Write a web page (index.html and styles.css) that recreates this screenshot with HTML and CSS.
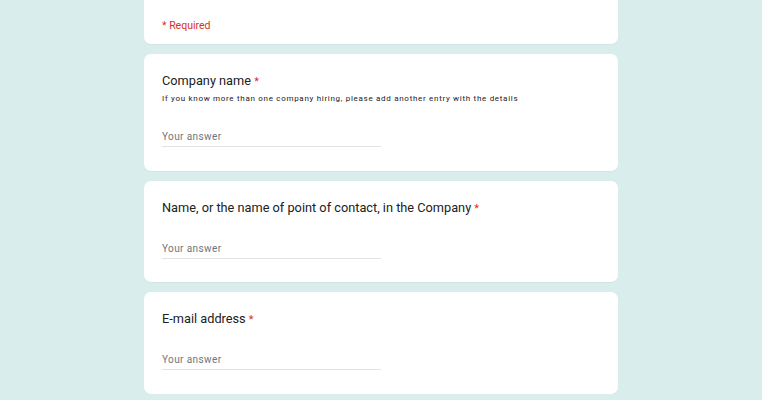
FILE: index.html
```html
<!DOCTYPE html>
<html>
<head>
<meta charset="utf-8">
<link rel="stylesheet" href="styles.css">
</head>
<body>
<main class="form">
  <section class="card card-head">
    <p class="required-note">* Required</p>
  </section>
  <section class="card">
    <div class="q-title">Company name <span class="star">*</span></div>
    <div class="q-desc">If you know more than one company hiring, please add another entry with the details</div>
    <div class="answer">Your answer</div>
  </section>
  <section class="card">
    <div class="q-title">Name, or the name of point of contact, in the Company <span class="star">*</span></div>
    <div class="answer">Your answer</div>
  </section>
  <section class="card">
    <div class="q-title">E-mail address <span class="star">*</span></div>
    <div class="answer">Your answer</div>
  </section>
</main>
</body>
</html>
```

FILE: styles.css
```css
html, body {
  margin: 0;
  padding: 0;
  background: #d9eeec;
  font-family: Roboto, "Noto Sans", sans-serif;
  overflow: hidden;
}
.form {
  width: 474px;
  margin: -10px auto 0;
  display: flex;
  flex-direction: column;
  gap: 10px;
}
.card {
  background: #fff;
  border-radius: 7px;
  padding: 19px 18px 23.5px;
  box-shadow: 0 1px 1px rgba(0, 0, 0, 0.04);
}
.card-head {
  padding: 29px 18px 11px;
}
.required-note {
  margin: 0;
  color: #d93025;
  font-size: 10.5px;
  line-height: 14px;
}
.q-title {
  color: #202124;
  font-size: 12.75px;
  line-height: 16px;
}
.star {
  color: #d93025;
  font-size: 11px;
}
.q-desc {
  margin: 3px 0 1px;
  color: #202124;
  font-size: 8px;
  line-height: 12px;
  letter-spacing: 0.7px;
}
.answer {
  margin-top: 25px;
  width: 219px;
  color: #70757a;
  font-size: 10px;
  line-height: 14px;
  letter-spacing: 0.4px;
  padding-bottom: 2px;
  border-bottom: 1px solid #e3e3e3;
}
```
